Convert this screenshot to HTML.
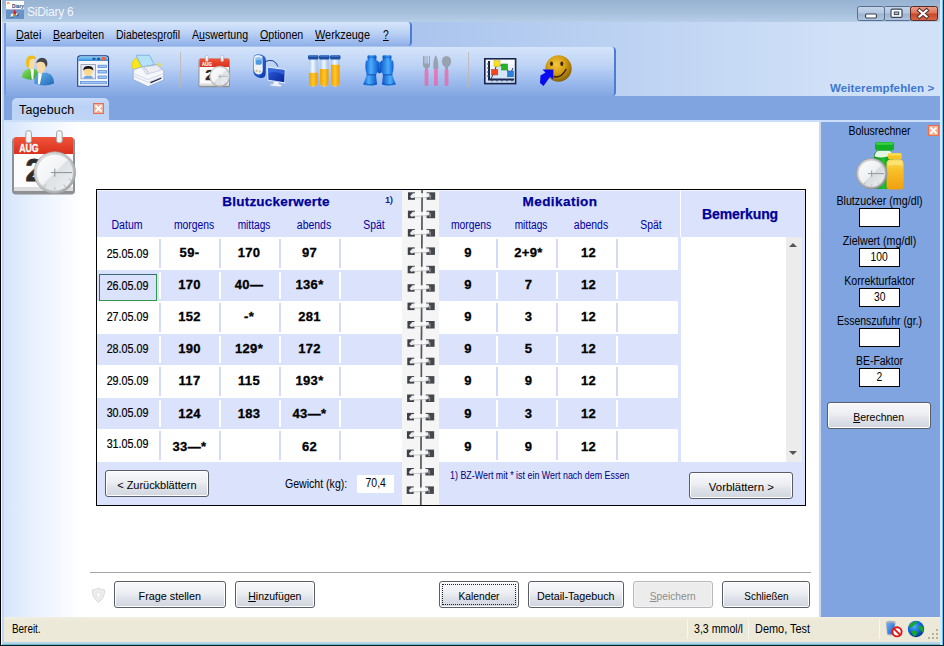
<!DOCTYPE html>
<html lang="de">
<head>
<meta charset="utf-8">
<title>SiDiary 6</title>
<style>
*{box-sizing:border-box;margin:0;padding:0}
html,body{width:944px;height:646px;overflow:hidden;background:#fff}
body{position:relative;font-family:"Liberation Sans",sans-serif;font-size:11px;color:#000}
.abs{position:absolute}
u{text-decoration:underline;text-underline-offset:1px}
/* window chrome */
#titlebar{left:0;top:0;width:944px;height:22px;background:linear-gradient(#97b2d2 0,#a7c0dd 60%,#b7cee8 100%)}
#title{left:27px;top:4.2px;font-size:12px;color:#f2f6fc;letter-spacing:-.25px;line-height:17px}
#menurow{left:0;top:22px;width:944px;height:74px;background:linear-gradient(90deg,#a8c2ec 0,#abc5ee 45%,#cfe0f7 88%,#d0e1f8 100%)}
#menupanel{left:3px;top:22px;width:409px;height:24px;border-right:2px solid #4c7dd2;border-radius:0 4px 4px 0;background:linear-gradient(#d6e6fb 0,#bcd2f5 45%,#8eafe8 100%)}
.mi{top:27.8px;font-size:12px;line-height:14px;white-space:nowrap;transform-origin:0 50%}
#toolpanel{left:3px;top:47px;width:613px;height:49px;border-right:2px solid #4c7dd2;border-radius:0 4px 4px 0;background:linear-gradient(#d4e4fa 0,#bcd2f5 40%,#9dbbee 70%,#82a7e2 100%)}
#tabrow{left:0;top:95.5px;width:944px;height:25.5px;background:#7fa4df}
#tab{left:12px;top:97.5px;width:97px;height:23.5px;background:linear-gradient(#c6dafa,#bad2f6 40%,#c0d6f7);border-radius:5px 5px 0 0}
#tabtxt{left:19px;top:102px;font-size:12.5px;line-height:16px;letter-spacing:.15px}
#underline{left:0;top:120px;width:944px;height:2px;background:#cbdefa}
#content{left:4px;top:122px;width:816px;height:495px;background:linear-gradient(90deg,#d5e6fc 0,#e8f1fd 30px,#fff 77px)}
#rightpanel{left:820px;top:122px;width:121px;height:495px;background:#7fa4df}
#status{left:0;top:617px;width:944px;height:25px;background:linear-gradient(#f1efe2 0,#ece9d8 4px,#ece9d8 100%)}
#bottomedge{left:0;top:642px;width:944px;height:4px;background:linear-gradient(#b9d4ea 0,#b4d4ea 2px,#62b0c0 2.6px,#00262c 3.2px)}
#leftedge{left:0;top:0;width:2px;height:644.5px;background:linear-gradient(90deg,#000 0,#000 50%,#f4f8ff 50%)}
#leftedge2{left:2px;top:22px;width:2px;height:622px;background:#c2d6f5}
#leftedge3{left:4px;top:23px;width:1.5px;height:72px;background:#7398dc}
#rightedge{left:940px;top:0;width:4px;height:644.5px;background:linear-gradient(90deg,#d8e8fd 0,#d8e8fd 1.7px,#5ec6ef 1.7px,#5ec6ef 2.7px,#0a1a40 2.7px)}
.hd{font-weight:bold;font-size:13.5px;line-height:16px;color:#000099;-webkit-text-stroke:.25px #000099;text-align:center;letter-spacing:.2px;white-space:nowrap}
.ch{width:80px;text-align:center;font-size:12px;line-height:14px;color:#0000a0;white-space:nowrap;transform:scaleX(.87)}
.dt{width:61px;text-align:center;font-size:12.5px;line-height:16px;white-space:nowrap;transform:scaleX(.857);-webkit-text-stroke:.2px #000}
.vl{width:60px;text-align:center;font-size:13px;font-weight:bold;line-height:16px;letter-spacing:.35px;white-space:nowrap;-webkit-text-stroke:.3px #000}
.btn{border:1px solid #595d68;border-radius:3px;background:linear-gradient(#f9f9fb 0,#eceef2 45%,#dfe2e9 65%,#d1d5df 100%);box-shadow:inset 0 0 0 1px #fff;font-size:11px;text-align:center;white-space:nowrap;display:flex;align-items:center;justify-content:center}
.pl{width:121px;text-align:center;font-size:12px;line-height:14px;white-space:nowrap;transform:scaleX(.895)}
.inp{width:41px;height:19px;background:#fff;border:1px solid #000;font-size:12px;line-height:17px;text-align:center}.inp span{display:inline-block;transform:scaleX(.86)}
.bt{display:inline-block;position:relative;top:1px}
.dis{color:#8c8c8c;border-color:#b6b8bb;background:#ececec;box-shadow:inset 0 0 0 1px #f4f4f4}
.st{font-size:12px;line-height:16px;white-space:nowrap;transform:scaleX(.9);transform-origin:0 50%}
</style>
</head>
<body>
<div id="titlebar" class="abs"></div>
<div id="title" class="abs">SiDiary 6</div>
<div id="menurow" class="abs"></div>
<div id="menupanel" class="abs"></div>
<div class="abs mi" style="left:16px;transform:scaleX(0.903)"><u>D</u>atei</div>
<div class="abs mi" style="left:53px;transform:scaleX(0.879)"><u>B</u>earbeiten</div>
<div class="abs mi" style="left:116px;transform:scaleX(0.872)">Diabetes<u>p</u>rofil</div>
<div class="abs mi" style="left:192px;transform:scaleX(0.884)">A<u>u</u>swertung</div>
<div class="abs mi" style="left:260px;transform:scaleX(0.888)"><u>O</u>ptionen</div>
<div class="abs mi" style="left:315px;transform:scaleX(0.909)"><u>W</u>erkzeuge</div>
<div class="abs mi" style="left:383px;transform:scaleX(0.86)"><u>?</u></div>
<div id="toolpanel" class="abs"></div>
<div id="tabrow" class="abs"></div>
<div id="tab" class="abs"></div>
<div id="tabtxt" class="abs">Tagebuch</div>
<div id="underline" class="abs"></div>
<div id="content" class="abs"></div>
<div id="rightpanel" class="abs"></div>
<div id="status" class="abs"></div>
<div id="bottomedge" class="abs"></div>
<div id="leftedge" class="abs"></div>
<div id="leftedge2" class="abs"></div>
<div id="leftedge3" class="abs"></div>
<div id="rightedge" class="abs"></div>
<div class="abs" style="left:96px;top:189px;width:710px;height:317px;border:1px solid #000;border-top-width:2px;background:#dbe2fb"></div>
<div class="abs" style="left:97px;top:190px;width:708px;height:1px;background:#f4f6fe"></div>
<div class="abs" style="left:402px;top:190px;width:37px;height:315px;background:#f5f5f6"></div>
<div class="abs" style="left:97px;top:237px;width:305px;height:33px;background:#fff"></div>
<div class="abs" style="left:439px;top:237px;width:239px;height:33px;background:#fff"></div>
<div class="abs" style="left:97px;top:301px;width:305px;height:33px;background:#fff"></div>
<div class="abs" style="left:439px;top:301px;width:239px;height:33px;background:#fff"></div>
<div class="abs" style="left:97px;top:365px;width:305px;height:33px;background:#fff"></div>
<div class="abs" style="left:439px;top:365px;width:239px;height:33px;background:#fff"></div>
<div class="abs" style="left:97px;top:429px;width:305px;height:33px;background:#fff"></div>
<div class="abs" style="left:439px;top:429px;width:239px;height:33px;background:#fff"></div>
<div class="abs" style="left:159px;top:239px;width:2px;height:29px;background:#d3dbf8"></div>
<div class="abs" style="left:219px;top:239px;width:2px;height:29px;background:#d3dbf8"></div>
<div class="abs" style="left:279px;top:239px;width:2px;height:29px;background:#d3dbf8"></div>
<div class="abs" style="left:339px;top:239px;width:2px;height:29px;background:#d3dbf8"></div>
<div class="abs" style="left:496px;top:239px;width:2px;height:29px;background:#d3dbf8"></div>
<div class="abs" style="left:556px;top:239px;width:2px;height:29px;background:#d3dbf8"></div>
<div class="abs" style="left:616px;top:239px;width:2px;height:29px;background:#d3dbf8"></div>
<div class="abs" style="left:159px;top:272px;width:2px;height:27px;background:#fff"></div>
<div class="abs" style="left:219px;top:272px;width:2px;height:27px;background:#fff"></div>
<div class="abs" style="left:279px;top:272px;width:2px;height:27px;background:#fff"></div>
<div class="abs" style="left:339px;top:272px;width:2px;height:27px;background:#fff"></div>
<div class="abs" style="left:496px;top:272px;width:2px;height:27px;background:#fff"></div>
<div class="abs" style="left:556px;top:272px;width:2px;height:27px;background:#fff"></div>
<div class="abs" style="left:616px;top:272px;width:2px;height:27px;background:#fff"></div>
<div class="abs" style="left:159px;top:303px;width:2px;height:29px;background:#d3dbf8"></div>
<div class="abs" style="left:219px;top:303px;width:2px;height:29px;background:#d3dbf8"></div>
<div class="abs" style="left:279px;top:303px;width:2px;height:29px;background:#d3dbf8"></div>
<div class="abs" style="left:339px;top:303px;width:2px;height:29px;background:#d3dbf8"></div>
<div class="abs" style="left:496px;top:303px;width:2px;height:29px;background:#d3dbf8"></div>
<div class="abs" style="left:556px;top:303px;width:2px;height:29px;background:#d3dbf8"></div>
<div class="abs" style="left:616px;top:303px;width:2px;height:29px;background:#d3dbf8"></div>
<div class="abs" style="left:159px;top:336px;width:2px;height:27px;background:#fff"></div>
<div class="abs" style="left:219px;top:336px;width:2px;height:27px;background:#fff"></div>
<div class="abs" style="left:279px;top:336px;width:2px;height:27px;background:#fff"></div>
<div class="abs" style="left:339px;top:336px;width:2px;height:27px;background:#fff"></div>
<div class="abs" style="left:496px;top:336px;width:2px;height:27px;background:#fff"></div>
<div class="abs" style="left:556px;top:336px;width:2px;height:27px;background:#fff"></div>
<div class="abs" style="left:616px;top:336px;width:2px;height:27px;background:#fff"></div>
<div class="abs" style="left:159px;top:367px;width:2px;height:29px;background:#d3dbf8"></div>
<div class="abs" style="left:219px;top:367px;width:2px;height:29px;background:#d3dbf8"></div>
<div class="abs" style="left:279px;top:367px;width:2px;height:29px;background:#d3dbf8"></div>
<div class="abs" style="left:339px;top:367px;width:2px;height:29px;background:#d3dbf8"></div>
<div class="abs" style="left:496px;top:367px;width:2px;height:29px;background:#d3dbf8"></div>
<div class="abs" style="left:556px;top:367px;width:2px;height:29px;background:#d3dbf8"></div>
<div class="abs" style="left:616px;top:367px;width:2px;height:29px;background:#d3dbf8"></div>
<div class="abs" style="left:159px;top:400px;width:2px;height:27px;background:#fff"></div>
<div class="abs" style="left:219px;top:400px;width:2px;height:27px;background:#fff"></div>
<div class="abs" style="left:279px;top:400px;width:2px;height:27px;background:#fff"></div>
<div class="abs" style="left:339px;top:400px;width:2px;height:27px;background:#fff"></div>
<div class="abs" style="left:496px;top:400px;width:2px;height:27px;background:#fff"></div>
<div class="abs" style="left:556px;top:400px;width:2px;height:27px;background:#fff"></div>
<div class="abs" style="left:616px;top:400px;width:2px;height:27px;background:#fff"></div>
<div class="abs" style="left:159px;top:431px;width:2px;height:29px;background:#d3dbf8"></div>
<div class="abs" style="left:219px;top:431px;width:2px;height:29px;background:#d3dbf8"></div>
<div class="abs" style="left:279px;top:431px;width:2px;height:29px;background:#d3dbf8"></div>
<div class="abs" style="left:339px;top:431px;width:2px;height:29px;background:#d3dbf8"></div>
<div class="abs" style="left:496px;top:431px;width:2px;height:29px;background:#d3dbf8"></div>
<div class="abs" style="left:556px;top:431px;width:2px;height:29px;background:#d3dbf8"></div>
<div class="abs" style="left:616px;top:431px;width:2px;height:29px;background:#d3dbf8"></div>
<div class="abs" style="left:680px;top:191px;width:1px;height:46px;background:#fff"></div>
<div class="abs" style="left:681px;top:237px;width:105px;height:225px;background:#fff"></div>
<div class="abs" style="left:786px;top:237px;width:16px;height:225px;background:#ececec"></div>
<div class="abs" style="left:789px;top:243px;width:0;height:0;border-left:4px solid transparent;border-right:4px solid transparent;border-bottom:4px solid #555"></div>
<div class="abs" style="left:789px;top:451px;width:0;height:0;border-left:4px solid transparent;border-right:4px solid transparent;border-top:4px solid #555"></div>
<div class="abs hd" style="left:196px;top:194px;width:160px">Blutzuckerwerte</div>
<div class="abs hd" style="left:480px;top:194px;width:160px;letter-spacing:.45px">Medikation</div>
<div class="abs hd" style="left:681px;top:206px;width:118px;font-size:14px;letter-spacing:-.1px">Bemerkung</div>
<div class="abs" style="left:385px;top:194px;font-size:9.5px;color:#000080;line-height:11px;letter-spacing:-.5px;-webkit-text-stroke:.2px #000080">1)</div>
<div class="abs ch" style="left:86.5px;top:218px;transform:scaleX(0.877)">Datum</div>
<div class="abs ch" style="left:154px;top:218px;transform:scaleX(0.861)">morgens</div>
<div class="abs ch" style="left:213.5px;top:218px;transform:scaleX(0.845)">mittags</div>
<div class="abs ch" style="left:274px;top:218px;transform:scaleX(0.871)">abends</div>
<div class="abs ch" style="left:334px;top:218px;transform:scaleX(0.867)">Spät</div>
<div class="abs ch" style="left:431px;top:218px;transform:scaleX(0.861)">morgens</div>
<div class="abs ch" style="left:490.5px;top:218px;transform:scaleX(0.845)">mittags</div>
<div class="abs ch" style="left:551px;top:218px;transform:scaleX(0.871)">abends</div>
<div class="abs ch" style="left:611px;top:218px;transform:scaleX(0.867)">Spät</div>
<div class="abs" style="left:99px;top:274px;width:58px;height:27px;border:1px solid #2f9a4c;border-top-color:#3a6a7a;border-left-color:#3a6a7a"></div>
<div class="abs dt" style="left:97px;top:245.7px">25.05.09</div>
<div class="abs vl" style="left:159.5px;top:244.9px">59-</div>
<div class="abs vl" style="left:438px;top:244.9px">9</div>
<div class="abs vl" style="left:219px;top:244.9px">170</div>
<div class="abs vl" style="left:498.5px;top:244.9px">2+9*</div>
<div class="abs vl" style="left:279.5px;top:244.9px">97</div>
<div class="abs vl" style="left:558.5px;top:244.9px">12</div>
<div class="abs dt" style="left:97px;top:277.7px">26.05.09</div>
<div class="abs vl" style="left:159.5px;top:276.9px">170</div>
<div class="abs vl" style="left:438px;top:276.9px">9</div>
<div class="abs vl" style="left:219px;top:276.9px">40—</div>
<div class="abs vl" style="left:498.5px;top:276.9px">7</div>
<div class="abs vl" style="left:279.5px;top:276.9px">136*</div>
<div class="abs vl" style="left:558.5px;top:276.9px">12</div>
<div class="abs dt" style="left:97px;top:308.7px">27.05.09</div>
<div class="abs vl" style="left:159.5px;top:308.9px">152</div>
<div class="abs vl" style="left:438px;top:308.9px">9</div>
<div class="abs vl" style="left:219px;top:308.9px">-*</div>
<div class="abs vl" style="left:498.5px;top:308.9px">3</div>
<div class="abs vl" style="left:279.5px;top:308.9px">281</div>
<div class="abs vl" style="left:558.5px;top:308.9px">12</div>
<div class="abs dt" style="left:97px;top:340.7px">28.05.09</div>
<div class="abs vl" style="left:159.5px;top:341.1px">190</div>
<div class="abs vl" style="left:438px;top:341.1px">9</div>
<div class="abs vl" style="left:219px;top:341.1px">129*</div>
<div class="abs vl" style="left:498.5px;top:341.1px">5</div>
<div class="abs vl" style="left:279.5px;top:341.1px">172</div>
<div class="abs vl" style="left:558.5px;top:341.1px">12</div>
<div class="abs dt" style="left:97px;top:372.7px">29.05.09</div>
<div class="abs vl" style="left:159.5px;top:373.3px">117</div>
<div class="abs vl" style="left:438px;top:373.3px">9</div>
<div class="abs vl" style="left:219px;top:373.3px">115</div>
<div class="abs vl" style="left:498.5px;top:373.3px">9</div>
<div class="abs vl" style="left:279.5px;top:373.3px">193*</div>
<div class="abs vl" style="left:558.5px;top:373.3px">12</div>
<div class="abs dt" style="left:97px;top:404.7px">30.05.09</div>
<div class="abs vl" style="left:159.5px;top:406.4px">124</div>
<div class="abs vl" style="left:438px;top:406.4px">9</div>
<div class="abs vl" style="left:219px;top:406.4px">183</div>
<div class="abs vl" style="left:498.5px;top:406.4px">3</div>
<div class="abs vl" style="left:279.5px;top:406.4px">43—*</div>
<div class="abs vl" style="left:558.5px;top:406.4px">12</div>
<div class="abs dt" style="left:97px;top:435.7px">31.05.09</div>
<div class="abs vl" style="left:159.5px;top:438.8px">33—*</div>
<div class="abs vl" style="left:438px;top:438.8px">9</div>
<div class="abs vl" style="left:498.5px;top:438.8px">9</div>
<div class="abs vl" style="left:279.5px;top:438.8px">62</div>
<div class="abs vl" style="left:558.5px;top:438.8px">12</div>
<div class="abs btn" style="left:105px;top:470px;width:104px;height:27px"><span class="bt" style="transform:scaleX(0.995)">&lt; Zurückblättern</span></div>
<div class="abs btn" style="left:689px;top:472px;width:104px;height:27px"><span class="bt" style="transform:scaleX(1.037)">Vorblättern &gt;</span></div>
<div class="abs" style="left:284.5px;top:477px;font-size:12px;line-height:14px;white-space:nowrap;transform:scaleX(.88);transform-origin:0 50%">Gewicht (kg):</div>
<div class="abs" style="left:357px;top:475px;width:37px;height:18px;background:#fff;font-size:12px;line-height:17px;text-align:center"><span style="display:inline-block;transform:scaleX(.87)">70,4</span></div>
<div class="abs" style="left:449.5px;top:469px;font-size:10.5px;line-height:12px;color:#000080;white-space:nowrap;transform:scaleX(.848);transform-origin:0 50%">1) BZ-Wert mit * ist ein Wert nach dem Essen</div>
<svg class="abs" style="left:402px;top:190px" width="37" height="315" viewBox="0 0 37 315"><path d="M20.1 0 L18.8 315" stroke="#54575b" stroke-width="1.7"/><g transform="translate(-0.00,2.3)"><rect x="6" y="0" width="7" height="7.5" fill="#3e4146"/><rect x="24.6" y="0" width="8.6" height="7.5" fill="#44474c"/><rect x="27.5" y="2.4" width="1.6" height="4" fill="#8a8d92"/><path d="M8 4.2 L10.8 1 L27.4 1 L27.4 4.6 L13 5.2 L9.5 6 Z" fill="#fafafb" opacity=".93"/><path d="M12 5.6 L26 5" stroke="#b4b6ba" stroke-width=".7"/></g><g transform="translate(-0.08,20.7)"><rect x="6" y="0" width="7" height="7.5" fill="#3e4146"/><rect x="24.6" y="0" width="8.6" height="7.5" fill="#44474c"/><rect x="27.5" y="2.4" width="1.6" height="4" fill="#8a8d92"/><path d="M8 4.2 L10.8 1 L27.4 1 L27.4 4.6 L13 5.2 L9.5 6 Z" fill="#fafafb" opacity=".93"/><path d="M12 5.6 L26 5" stroke="#b4b6ba" stroke-width=".7"/></g><g transform="translate(-0.16,39.1)"><rect x="6" y="0" width="7" height="7.5" fill="#3e4146"/><rect x="24.6" y="0" width="8.6" height="7.5" fill="#44474c"/><rect x="27.5" y="2.4" width="1.6" height="4" fill="#8a8d92"/><path d="M8 4.2 L10.8 1 L27.4 1 L27.4 4.6 L13 5.2 L9.5 6 Z" fill="#fafafb" opacity=".93"/><path d="M12 5.6 L26 5" stroke="#b4b6ba" stroke-width=".7"/></g><g transform="translate(-0.24,57.4)"><rect x="6" y="0" width="7" height="7.5" fill="#3e4146"/><rect x="24.6" y="0" width="8.6" height="7.5" fill="#44474c"/><rect x="27.5" y="2.4" width="1.6" height="4" fill="#8a8d92"/><path d="M8 4.2 L10.8 1 L27.4 1 L27.4 4.6 L13 5.2 L9.5 6 Z" fill="#fafafb" opacity=".93"/><path d="M12 5.6 L26 5" stroke="#b4b6ba" stroke-width=".7"/></g><g transform="translate(-0.33,75.8)"><rect x="6" y="0" width="7" height="7.5" fill="#3e4146"/><rect x="24.6" y="0" width="8.6" height="7.5" fill="#44474c"/><rect x="27.5" y="2.4" width="1.6" height="4" fill="#8a8d92"/><path d="M8 4.2 L10.8 1 L27.4 1 L27.4 4.6 L13 5.2 L9.5 6 Z" fill="#fafafb" opacity=".93"/><path d="M12 5.6 L26 5" stroke="#b4b6ba" stroke-width=".7"/></g><g transform="translate(-0.41,94.2)"><rect x="6" y="0" width="7" height="7.5" fill="#3e4146"/><rect x="24.6" y="0" width="8.6" height="7.5" fill="#44474c"/><rect x="27.5" y="2.4" width="1.6" height="4" fill="#8a8d92"/><path d="M8 4.2 L10.8 1 L27.4 1 L27.4 4.6 L13 5.2 L9.5 6 Z" fill="#fafafb" opacity=".93"/><path d="M12 5.6 L26 5" stroke="#b4b6ba" stroke-width=".7"/></g><g transform="translate(-0.49,112.6)"><rect x="6" y="0" width="7" height="7.5" fill="#3e4146"/><rect x="24.6" y="0" width="8.6" height="7.5" fill="#44474c"/><rect x="27.5" y="2.4" width="1.6" height="4" fill="#8a8d92"/><path d="M8 4.2 L10.8 1 L27.4 1 L27.4 4.6 L13 5.2 L9.5 6 Z" fill="#fafafb" opacity=".93"/><path d="M12 5.6 L26 5" stroke="#b4b6ba" stroke-width=".7"/></g><g transform="translate(-0.57,131.0)"><rect x="6" y="0" width="7" height="7.5" fill="#3e4146"/><rect x="24.6" y="0" width="8.6" height="7.5" fill="#44474c"/><rect x="27.5" y="2.4" width="1.6" height="4" fill="#8a8d92"/><path d="M8 4.2 L10.8 1 L27.4 1 L27.4 4.6 L13 5.2 L9.5 6 Z" fill="#fafafb" opacity=".93"/><path d="M12 5.6 L26 5" stroke="#b4b6ba" stroke-width=".7"/></g><g transform="translate(-0.65,149.3)"><rect x="6" y="0" width="7" height="7.5" fill="#3e4146"/><rect x="24.6" y="0" width="8.6" height="7.5" fill="#44474c"/><rect x="27.5" y="2.4" width="1.6" height="4" fill="#8a8d92"/><path d="M8 4.2 L10.8 1 L27.4 1 L27.4 4.6 L13 5.2 L9.5 6 Z" fill="#fafafb" opacity=".93"/><path d="M12 5.6 L26 5" stroke="#b4b6ba" stroke-width=".7"/></g><g transform="translate(-0.73,167.7)"><rect x="6" y="0" width="7" height="7.5" fill="#3e4146"/><rect x="24.6" y="0" width="8.6" height="7.5" fill="#44474c"/><rect x="27.5" y="2.4" width="1.6" height="4" fill="#8a8d92"/><path d="M8 4.2 L10.8 1 L27.4 1 L27.4 4.6 L13 5.2 L9.5 6 Z" fill="#fafafb" opacity=".93"/><path d="M12 5.6 L26 5" stroke="#b4b6ba" stroke-width=".7"/></g><g transform="translate(-0.81,186.1)"><rect x="6" y="0" width="7" height="7.5" fill="#3e4146"/><rect x="24.6" y="0" width="8.6" height="7.5" fill="#44474c"/><rect x="27.5" y="2.4" width="1.6" height="4" fill="#8a8d92"/><path d="M8 4.2 L10.8 1 L27.4 1 L27.4 4.6 L13 5.2 L9.5 6 Z" fill="#fafafb" opacity=".93"/><path d="M12 5.6 L26 5" stroke="#b4b6ba" stroke-width=".7"/></g><g transform="translate(-0.89,204.5)"><rect x="6" y="0" width="7" height="7.5" fill="#3e4146"/><rect x="24.6" y="0" width="8.6" height="7.5" fill="#44474c"/><rect x="27.5" y="2.4" width="1.6" height="4" fill="#8a8d92"/><path d="M8 4.2 L10.8 1 L27.4 1 L27.4 4.6 L13 5.2 L9.5 6 Z" fill="#fafafb" opacity=".93"/><path d="M12 5.6 L26 5" stroke="#b4b6ba" stroke-width=".7"/></g><g transform="translate(-0.98,222.9)"><rect x="6" y="0" width="7" height="7.5" fill="#3e4146"/><rect x="24.6" y="0" width="8.6" height="7.5" fill="#44474c"/><rect x="27.5" y="2.4" width="1.6" height="4" fill="#8a8d92"/><path d="M8 4.2 L10.8 1 L27.4 1 L27.4 4.6 L13 5.2 L9.5 6 Z" fill="#fafafb" opacity=".93"/><path d="M12 5.6 L26 5" stroke="#b4b6ba" stroke-width=".7"/></g><g transform="translate(-1.06,241.2)"><rect x="6" y="0" width="7" height="7.5" fill="#3e4146"/><rect x="24.6" y="0" width="8.6" height="7.5" fill="#44474c"/><rect x="27.5" y="2.4" width="1.6" height="4" fill="#8a8d92"/><path d="M8 4.2 L10.8 1 L27.4 1 L27.4 4.6 L13 5.2 L9.5 6 Z" fill="#fafafb" opacity=".93"/><path d="M12 5.6 L26 5" stroke="#b4b6ba" stroke-width=".7"/></g><g transform="translate(-1.14,259.6)"><rect x="6" y="0" width="7" height="7.5" fill="#3e4146"/><rect x="24.6" y="0" width="8.6" height="7.5" fill="#44474c"/><rect x="27.5" y="2.4" width="1.6" height="4" fill="#8a8d92"/><path d="M8 4.2 L10.8 1 L27.4 1 L27.4 4.6 L13 5.2 L9.5 6 Z" fill="#fafafb" opacity=".93"/><path d="M12 5.6 L26 5" stroke="#b4b6ba" stroke-width=".7"/></g><g transform="translate(-1.22,278.0)"><rect x="6" y="0" width="7" height="7.5" fill="#3e4146"/><rect x="24.6" y="0" width="8.6" height="7.5" fill="#44474c"/><rect x="27.5" y="2.4" width="1.6" height="4" fill="#8a8d92"/><path d="M8 4.2 L10.8 1 L27.4 1 L27.4 4.6 L13 5.2 L9.5 6 Z" fill="#fafafb" opacity=".93"/><path d="M12 5.6 L26 5" stroke="#b4b6ba" stroke-width=".7"/></g><g transform="translate(-1.30,296.4)"><rect x="6" y="0" width="7" height="7.5" fill="#3e4146"/><rect x="24.6" y="0" width="8.6" height="7.5" fill="#44474c"/><rect x="27.5" y="2.4" width="1.6" height="4" fill="#8a8d92"/><path d="M8 4.2 L10.8 1 L27.4 1 L27.4 4.6 L13 5.2 L9.5 6 Z" fill="#fafafb" opacity=".93"/><path d="M12 5.6 L26 5" stroke="#b4b6ba" stroke-width=".7"/></g></svg>
<div class="abs" style="left:819px;top:122px;width:2px;height:495px;background:#cbd9ef"></div>
<div class="abs pl" style="left:819px;top:124px;transform:scaleX(0.877)">Bolusrechner</div>
<svg class="abs" style="left:928px;top:125px" width="11" height="11" viewBox="0 0 11 11"><rect x=".5" y=".5" width="10" height="10" fill="#f2b09a" stroke="#e8714f"/><path d="M3 3 L8 8 M8 3 L3 8" stroke="#fff" stroke-width="1.8" stroke-linecap="round"/></svg>
<div class="abs pl" style="left:819px;top:194px;transform:scaleX(0.891)">Blutzucker (mg/dl)</div>
<div class="abs inp" style="left:859px;top:208px"></div>
<div class="abs pl" style="left:819px;top:234px;transform:scaleX(0.889)">Zielwert (mg/dl)</div>
<div class="abs inp" style="left:859px;top:248px"><span>100</span></div>
<div class="abs pl" style="left:819px;top:274px;transform:scaleX(0.888)">Korrekturfaktor</div>
<div class="abs inp" style="left:859px;top:288px"><span>30</span></div>
<div class="abs pl" style="left:819px;top:314px;transform:scaleX(0.873)">Essenszufuhr (gr.)</div>
<div class="abs inp" style="left:859px;top:328px"></div>
<div class="abs pl" style="left:819px;top:354px;transform:scaleX(0.87)">BE-Faktor</div>
<div class="abs inp" style="left:859px;top:368px"><span>2</span></div>
<div class="abs btn" style="left:827px;top:402px;width:104px;height:27px"><span class="bt" style="transform:scaleX(0.955)"><u>B</u>erechnen</span></div>

<div class="abs" style="left:90px;top:572px;width:721px;height:1px;background:#a5a5a5"></div>
<div class="abs btn" style="left:114px;top:581px;width:112px;height:27px"><span class="bt" style="transform:scaleX(0.983)">Frage stellen</span></div>
<div class="abs btn" style="left:235px;top:581px;width:80px;height:27px"><span class="bt" style="transform:scaleX(0.956)"><u>H</u>inzufügen</span></div>
<div class="abs btn" style="left:439px;top:581px;width:80px;height:27px"><span class="bt" style="transform:scaleX(0.931)">Kalender</span><i class="abs" style="left:2px;top:2px;right:2px;bottom:2px;border:1px dotted #222"></i></div>
<div class="abs btn" style="left:528px;top:581px;width:96px;height:27px"><span class="bt" style="transform:scaleX(0.976)">Detail-Tagebuch</span></div>
<div class="abs btn dis" style="left:633px;top:581px;width:80px;height:27px"><span class="bt" style="transform:scaleX(0.928)"><u>S</u>peichern</span></div>
<div class="abs btn" style="left:722px;top:581px;width:88px;height:27px"><span class="bt" style="transform:scaleX(0.903)">Schließen</span></div>
<div class="abs st" style="left:12px;top:621px;transform:scaleX(0.825)">Bereit.</div>
<div class="abs st" style="left:694px;top:621px;transform:scaleX(0.885)">3,3 mmol/l</div>
<div class="abs st" style="left:755px;top:621px;transform:scaleX(0.91)">Demo, Test</div>
<div class="abs" style="left:687px;top:619px;width:1px;height:20px;background:#f8f6ee"></div>
<div class="abs" style="left:748px;top:619px;width:1px;height:20px;background:#f8f6ee"></div>
<div class="abs" style="left:879px;top:619px;width:1px;height:20px;background:#f8f6ee"></div>

<!-- title icon -->
<svg class="abs" style="left:6px;top:1px" width="18" height="18" viewBox="0 0 18 18">
<rect width="18" height="8.5" fill="#fff"/><rect y="8.5" width="18" height="9.5" fill="#6a92ca"/>
<rect x="1" y="1" width="2.5" height="2" fill="#f8a868"/>
<text x="6" y="7.4" font-family="Liberation Sans, sans-serif" font-size="5.5" font-weight="bold" fill="#1a3a5a" textLength="12" lengthAdjust="spacingAndGlyphs">Diary</text>
<path d="M8.5 8.5 Q10.5 10 10 13 L7.6 13 Q7 10 8.5 8.5Z" fill="#e02018"/>
<path d="M5 13 L7.5 12.5 L7 15.5 L4.5 16Z" fill="#e8f4ee"/><path d="M4.5 16 L7 15.5 L7 16.6 L4.5 16.8Z" fill="#1c7a50"/>
<circle cx="11.6" cy="13" r="1.4" fill="#f4f4f4"/><path d="M11 11.5 Q13.6 12.5 11.5 15.3" stroke="#1a2430" stroke-width="1" fill="none"/>
<path d="M7.6 13 L10 13 L9.6 15 L8 15Z" fill="#c88a20"/>
</svg>
<!-- window buttons -->
<svg class="abs" style="left:856px;top:5px" width="83" height="17" viewBox="0 0 83 17">
<defs><linearGradient id="wb" x1="0" y1="0" x2="0" y2="1"><stop offset="0" stop-color="#c6d6ea"/><stop offset=".48" stop-color="#b4c7e0"/><stop offset=".52" stop-color="#9db4d2"/><stop offset="1" stop-color="#b0c6e2"/></linearGradient>
<linearGradient id="wc" x1="0" y1="0" x2="0" y2="1"><stop offset="0" stop-color="#eba08c"/><stop offset=".48" stop-color="#dc7458"/><stop offset=".52" stop-color="#c84628"/><stop offset="1" stop-color="#d8684a"/></linearGradient></defs>
<rect x="1.5" y="1.5" width="27" height="14" rx="2" fill="url(#wb)" stroke="#5a6f8e"/>
<rect x="28.5" y="1.5" width="26" height="14" rx="1" fill="url(#wb)" stroke="#5a6f8e"/>
<rect x="54.5" y="1.5" width="27" height="14" rx="2" fill="url(#wc)" stroke="#5a2a24"/>
<rect x="9.5" y="9" width="11" height="4" rx="1.2" fill="#fff" stroke="#3c4654" stroke-width="1.2"/>
<rect x="35" y="4.2" width="11" height="8.2" rx="1.2" fill="#fff" stroke="#3c4654" stroke-width="1.2"/><rect x="38.3" y="7" width="4.4" height="2.6" fill="#b4c4d8" stroke="#3c4654" stroke-width="1"/>
<path d="M63.5 5.5 L70.5 11.5 M70.5 5.5 L63.5 11.5" stroke="#54302c" stroke-width="4.2" stroke-linecap="square"/>
<path d="M63.5 5.5 L70.5 11.5 M70.5 5.5 L63.5 11.5" stroke="#fff" stroke-width="2.2" stroke-linecap="square"/>
</svg>
<div class="abs" style="left:830px;top:81px;font-size:11.5px;font-weight:bold;color:#3d78d2;line-height:14px;white-space:nowrap;letter-spacing:.12px">Weiterempfehlen &gt;</div>
<!-- tab close -->
<svg class="abs" style="left:93px;top:103px" width="11" height="11" viewBox="0 0 11 11"><rect x=".5" y=".5" width="10" height="10" fill="#f2b09a" stroke="#e8714f"/><path d="M3 3 L8 8 M8 3 L3 8" stroke="#fff" stroke-width="1.8" stroke-linecap="round"/></svg>
<!-- toolbar separators -->
<div class="abs" style="left:180px;top:52px;width:1px;height:36px;background:rgba(196,180,172,.8)"></div>
<div class="abs" style="left:468px;top:52px;width:1px;height:36px;background:rgba(196,180,172,.8)"></div>
<!-- users -->
<svg class="abs" style="left:21px;top:54px" width="34" height="33" viewBox="0 0 34 33">
<defs><linearGradient id="ug" x1="0" y1="0" x2="1" y2="1"><stop offset="0" stop-color="#8ee060"/><stop offset="1" stop-color="#2c9c2a"/></linearGradient>
<linearGradient id="ub" x1="0" y1="0" x2="1" y2="1"><stop offset="0" stop-color="#6ab4ee"/><stop offset="1" stop-color="#2068b8"/></linearGradient></defs>
<path d="M1 23.5 Q.6 16.5 7.5 15 L14 15 Q17.5 16.5 17 24 Q9 27.5 1 23.5Z" fill="url(#ug)"/>
<path d="M9.5 15 L12.8 15 L12.4 25.6 L10.8 25.2Z" fill="#fff"/>
<path d="M7.2 5 Q10 2.5 13.4 4.4 L13.6 11.5 Q12.5 15.5 10.4 15.6 Q7.6 14.5 7.2 10Z" fill="#f8dca8"/>
<path d="M5.6 13.2 Q3.6 5 7.6 2.2 Q11.5 .4 14.8 3 Q15.2 5.2 13.6 5 Q10.4 4 8.6 6.4 Q8 9.5 8.2 13.4Z" fill="#f0be18"/>
<path d="M13.4 29.5 Q12.4 21.5 19 18.8 L26 18.8 Q33.4 21 33 29.6 Q23 33.6 13.4 29.5Z" fill="url(#ub)"/>
<path d="M17.4 19 L21 19.4 L18.8 30.6 L16.8 30Z" fill="#fff"/>
<path d="M15.6 10 Q17 6.5 21 7 Q24.6 8 24.4 13 Q24 17.5 20.6 19.6 Q17.8 19.4 16.4 16 Q15.4 13 15.6 10Z" fill="#f8d8a4"/>
<path d="M15.2 9.2 Q16 4.4 21 3.8 Q26.6 4.4 26.4 10 Q26.2 12.4 25 13.2 Q24.6 9.8 22.4 8.2 Q18.6 7.2 15.2 9.2Z" fill="#44464e"/>
</svg>
<!-- id card -->
<svg class="abs" style="left:76px;top:55px" width="34" height="32" viewBox="0 0 34 32">
<defs><linearGradient id="ic1" x1="0" y1="0" x2="0" y2="1"><stop offset="0" stop-color="#8ad0f6"/><stop offset="1" stop-color="#2f8edc"/></linearGradient></defs>
<path d="M1.7 31.2 V3.6 Q1.7 .9 4.4 .9 H29.8 Q32.5 .9 32.5 3.6 V31.2Z" fill="#f4f7fd" stroke="#1f3d8a" stroke-width="1.1"/>
<path d="M2.3 6 V3.7 Q2.3 1.5 4.5 1.5 H29.7 Q31.9 1.5 31.9 3.7 V6Z" fill="url(#ic1)"/>
<rect x="16.6" y="2.8" width="2.8" height="2" fill="#1c4e90"/><rect x="21.2" y="2.8" width="2.8" height="2" fill="#1c4e90"/><rect x="25.8" y="2" width="3.8" height="3.4" fill="#f0603c"/>
<rect x="5" y="9.6" width="14.6" height="14.2" fill="#e8eef8" stroke="#8e96aa" stroke-width=".8"/>
<path d="M7.6 23.4 Q8 20.6 12.3 20.6 Q16.6 20.6 17 23.4Z" fill="#6aa4e6"/>
<ellipse cx="12.3" cy="16.6" rx="4.3" ry="4.5" fill="#fcd88c"/>
<path d="M7.2 15.4 Q7.2 11 12.3 11 Q17.4 11 17.4 15.4 Q15 13.2 12.3 13.8 Q9.6 13.2 7.2 15.4Z" fill="#161616"/>
<rect x="22" y="10.2" width="8.6" height="2.4" fill="#a4c6f2" stroke="#4c84d4" stroke-width=".7"/>
<rect x="22" y="15.6" width="8.6" height="2.4" fill="#a4c6f2" stroke="#4c84d4" stroke-width=".7"/>
<rect x="22" y="21" width="8.6" height="2.4" fill="#a4c6f2" stroke="#4c84d4" stroke-width=".7"/>
<rect x="4.6" y="26.6" width="26" height="2.2" fill="#a4c6f2" stroke="#4c84d4" stroke-width=".7"/>
</svg>
<!-- printer -->
<svg class="abs" style="left:131px;top:54px" width="35" height="34" viewBox="0 0 35 34">
<path d="M1.2 13 Q.6 6 4.5 4.6 Q7.5 4 9 5.4 L11.4 13 L3 16Z" fill="#f8e81a" stroke="#d6c40e" stroke-width=".6"/>
<path d="M5.1 1.3 L18.6 1.3 L23.2 10.6 L11 13.2Z" fill="#b4e2f8" stroke="#68a8d4" stroke-width=".7"/>
<path d="M26.4 9.2 L29.4 9.6 L30 12 L27 12Z" fill="#f0e020"/>
<path d="M2.2 15.8 L11 12.8 L26.4 10.6 L32.8 17 L32.8 26 L17 32.6 L2.2 25.6Z" fill="#f6f7fb" stroke="#8ea8d0" stroke-width=".8"/>
<path d="M11 13.4 L25.6 11.4 L30.6 16 L15.4 20.4Z" fill="#eceef4" stroke="#b8bcd0" stroke-width=".6"/>
<path d="M13 14.2 Q17 16 17.4 19.6" stroke="#a8accc" stroke-width=".7" fill="none"/>
<path d="M2.4 19.5 L17 25.6 L32.8 19.4 M2.4 22 L17 28.4 L32.8 22" stroke="#c4c8dc" stroke-width=".7" fill="none"/>
<path d="M19.4 28 L30.4 23.4 L30.4 24.8 L19.4 29.5Z" fill="#20284c"/>
</svg>
<!-- device + monitor -->
<svg class="abs" style="left:252px;top:54px" width="35" height="34" viewBox="0 0 35 34">
<defs><linearGradient id="dv" x1="0" y1="0" x2="1" y2="1"><stop offset="0" stop-color="#4a90ec"/><stop offset="1" stop-color="#0a30a8"/></linearGradient>
<linearGradient id="mn" x1="0" y1="0" x2="1" y2="1"><stop offset="0" stop-color="#2c60dc"/><stop offset="1" stop-color="#08249c"/></linearGradient></defs>
<path d="M12.5 8 Q17 5.5 21 6.8 Q24.5 8.5 26 12.5" stroke="#1a3c9c" stroke-width="1" fill="none"/>
<path d="M4 .6 Q9 -.6 12.6 2.4 Q14.2 4 14 8 L13.6 20 Q13.2 24.4 8.5 24 Q3 23.4 1.4 19 L1.2 5 Q1.6 1.4 4 .6Z" fill="url(#dv)"/>
<path d="M3.8 1.4 Q7.5 .4 10.4 2.6 L10.8 15.5 Q10.6 20.6 6.6 20.4 Q2.4 20 2 15.5 L1.8 4.5 Q2.2 2 3.8 1.4Z" fill="#eef2f8"/>
<path d="M3.6 4 Q6.6 2.8 9.6 4 L9.8 10 Q6.8 11.6 3.6 10.2Z" fill="#4a98e2"/>
<path d="M3.6 4 Q6.6 2.8 9.6 4 L9.7 6.5 Q6.6 5.4 3.6 6.6Z" fill="#8cc4f0"/>
<circle cx="4.6" cy="16.8" r="1.1" fill="#c8b888"/><circle cx="7.8" cy="17.6" r="1.1" fill="#c8b888"/>
<path d="M15 12.6 L33.4 15.2 L33 29.4 L15.6 26.6Z" fill="#e8eef8"/>
<path d="M15.9 13.7 L32.6 16.1 L32.3 28.3 L16.4 25.8Z" fill="url(#mn)"/>
<path d="M16 19.5 Q23 16 32.5 21 L32.6 16.1 L15.9 13.7Z" fill="#4a84f0" opacity=".45"/>
<path d="M21.5 27 L26.5 27.8 L26.8 30.2 L29.8 31.2 L28.4 32.6 L18.6 31.8 L18.2 30.6 L21.6 29.8Z" fill="#f0f3f8" stroke="#b4c0d4" stroke-width=".5"/>
</svg>
<!-- test tubes -->
<svg class="abs" style="left:307px;top:54px" width="35" height="34" viewBox="0 0 35 34">
<defs><linearGradient id="tl" x1="0" y1="0" x2="1" y2="0"><stop offset="0" stop-color="#f0a000"/><stop offset=".5" stop-color="#ffc828"/><stop offset="1" stop-color="#f09800"/></linearGradient>
<linearGradient id="tg" x1="0" y1="0" x2="1" y2="0"><stop offset="0" stop-color="#a8c8f0"/><stop offset=".45" stop-color="#f4f8fe"/><stop offset="1" stop-color="#a0c0ec"/></linearGradient></defs>
<g><path d="M2 4 H10.5 V28 Q10.5 32.5 6.25 32.5 Q2 32.5 2 28Z" fill="url(#tg)"/><path d="M2 18.7 H10.5 V28 Q10.5 32.5 6.25 32.5 Q2 32.5 2 28Z" fill="url(#tl)"/><rect x="1" y="1" width="10.5" height="4.5" rx="1.5" fill="#1e4ea4"/><rect x="2" y="1.3" width="8.5" height="1.2" rx=".6" fill="#5a8ad8"/></g>
<g transform="translate(11,0)"><path d="M2 4 H10.5 V28 Q10.5 32.5 6.25 32.5 Q2 32.5 2 28Z" fill="url(#tg)"/><path d="M2 15 H10.5 V28 Q10.5 32.5 6.25 32.5 Q2 32.5 2 28Z" fill="url(#tl)"/><rect x="1" y="1" width="10.5" height="4.5" rx="1.5" fill="#1e4ea4"/><rect x="2" y="1.3" width="8.5" height="1.2" rx=".6" fill="#5a8ad8"/></g>
<g transform="translate(22,0)"><path d="M2 4 H10.5 V28 Q10.5 32.5 6.25 32.5 Q2 32.5 2 28Z" fill="url(#tg)"/><path d="M2 10.8 H10.5 V28 Q10.5 32.5 6.25 32.5 Q2 32.5 2 28Z" fill="url(#tl)"/><rect x="1" y="1" width="10.5" height="4.5" rx="1.5" fill="#1e4ea4"/><rect x="2" y="1.3" width="8.5" height="1.2" rx=".6" fill="#5a8ad8"/></g>
</svg>
<!-- binoculars -->
<svg class="abs" style="left:362px;top:54px" width="35" height="34" viewBox="0 0 35 34">
<defs><linearGradient id="bn" x1="0" y1="0" x2="1" y2="0"><stop offset="0" stop-color="#0c60d4"/><stop offset=".4" stop-color="#4cacfc"/><stop offset="1" stop-color="#0a58c8"/></linearGradient>
<linearGradient id="bn2" x1="0" y1="0" x2="0" y2="1"><stop offset="0" stop-color="#2a88f0"/><stop offset="1" stop-color="#0a48b8"/></linearGradient></defs>
<path d="M13 8 H22 V17 L17.5 19.5 L13 17Z" fill="url(#bn2)"/>
<g><rect x="5.6" y="1.2" width="8.8" height="5.8" rx="1" fill="url(#bn)"/><path d="M5.6 3.2 H14.4" stroke="#0a50c0" stroke-width=".7"/><path d="M4 6.6 H15.6 Q17.4 8 17 13 Q16.4 18 14 20.8 H4.8 Q2.4 14 4 6.6Z" fill="url(#bn)"/><path d="M4.8 20.8 H14 L15 30.6 Q8 33.2 1.2 30.6Z" fill="url(#bn)"/><path d="M4.6 20.8 H14.2" stroke="#0848b0" stroke-width=".9"/><path d="M1.6 29.6 Q8 32 14.8 29.6" stroke="#0848b0" stroke-width=".7" fill="none"/></g>
<g transform="translate(35,0) scale(-1,1)"><rect x="5.6" y="1.2" width="8.8" height="5.8" rx="1" fill="url(#bn)"/><path d="M5.6 3.2 H14.4" stroke="#0a50c0" stroke-width=".7"/><path d="M4 6.6 H15.6 Q17.4 8 17 13 Q16.4 18 14 20.8 H4.8 Q2.4 14 4 6.6Z" fill="url(#bn)"/><path d="M4.8 20.8 H14 L15 30.6 Q8 33.2 1.2 30.6Z" fill="url(#bn)"/><path d="M4.6 20.8 H14.2" stroke="#0848b0" stroke-width=".9"/><path d="M1.6 29.6 Q8 32 14.8 29.6" stroke="#0848b0" stroke-width=".7" fill="none"/></g>
</svg>
<!-- cutlery -->
<svg class="abs" style="left:421px;top:54px" width="32" height="34" viewBox="0 0 32 34" opacity=".72">
<path d="M2 2 V11 Q2 13.5 4 14 V16 H7 V14 Q9 13.5 9 11 V2 H8 V9.5 H6.6 V2 H5.6 V9.5 H4.4 V2 H3.4 V9.5 H3 V2Z" fill="#8a8e94"/>
<rect x="3.6" y="15" width="3.8" height="17" rx="1.6" fill="#f060a4"/>
<path d="M14.5 1 Q17.5 4 17.3 15 H12.6 Q11.5 8 14.5 1Z" fill="#8a8e94"/>
<rect x="13" y="14.5" width="3.8" height="17.5" rx="1.6" fill="#f060a4"/>
<ellipse cx="25.5" cy="7.5" rx="4.6" ry="5.5" fill="#8a8e94"/><rect x="24" y="11" width="3" height="5" fill="#8a8e94"/>
<rect x="23.6" y="15" width="3.8" height="17" rx="1.6" fill="#f060a4"/>
</svg>
<!-- chart -->
<svg class="abs" style="left:484px;top:58px" width="33" height="27" viewBox="0 0 33 27">
<defs><linearGradient id="cg" x1="0" y1="0" x2="0" y2="1"><stop offset="0" stop-color="#fff"/><stop offset="1" stop-color="#cfe0f6"/></linearGradient></defs>
<rect x=".8" y=".8" width="30.8" height="24.8" fill="url(#cg)" stroke="#18244c" stroke-width="1.6"/>
<path d="M7 21 L10.5 13.5 L13 5.5 L20.5 9 L26.5 15.5 L29 10 V21Z" fill="#d4e6f8"/>
<path d="M7 21 L10.5 13.5 L13 5.5 L20.5 9 L26.5 15.5 L29 10" stroke="#2a3a6a" stroke-width="1" fill="none"/>
<path d="M5 3 V21.5 H30" stroke="#18244c" stroke-width="2" fill="none"/>
<path d="M3 6 H5 M3 10 H5 M3 14 H5 M3 18 H5 M8 21.5 V23.5 M13 21.5 V23.5 M18 21.5 V23.5 M23 21.5 V23.5 M28 21.5 V23.5" stroke="#3a4a7a" stroke-width="1.2"/>
<rect x="10" y="2.7" width="6" height="6" fill="#f6e020" stroke="#c8b010" stroke-width=".5"/>
<rect x="7.6" y="11.5" width="6.2" height="5.4" fill="#f04820" stroke="#c03010" stroke-width=".5"/>
<rect x="17.6" y="6" width="6" height="6" fill="#28b428" stroke="#188a18" stroke-width=".5"/>
<rect x="23.6" y="13" width="5.8" height="5.8" fill="#2a80d8" stroke="#1a5cb0" stroke-width=".5"/>
</svg>
<!-- smiley -->
<svg class="abs" style="left:538px;top:54px" width="36" height="34" viewBox="0 0 36 34">
<defs><radialGradient id="sm" cx=".42" cy=".35" r=".7"><stop offset="0" stop-color="#f4c838"/><stop offset=".5" stop-color="#d49c14"/><stop offset="1" stop-color="#7c5a08"/></radialGradient></defs>
<circle cx="20.5" cy="14.5" r="13.2" fill="url(#sm)"/>
<ellipse cx="13.5" cy="9.8" rx="1.5" ry="2.3" fill="#3a2408"/><ellipse cx="23.8" cy="9.8" rx="1.5" ry="2.3" fill="#3a2408"/>
<path d="M14 22 Q22.5 25.5 28 15.5" stroke="#3a2408" stroke-width="1.5" fill="none" stroke-linecap="round"/>
<path d="M4.5 15.5 H15.5 V26 L12 23 L5.5 32 L2 29 L2.5 21.5 L7.5 18.5Z" fill="#0a0af0"/>
<path d="M15.5 16 V26 L12 23" stroke="#7a7a9a" stroke-width=".8" fill="none" opacity=".7"/>
</svg>
<!-- CALS -->
<svg class="abs" style="left:11px;top:129.5px" width="66" height="66" viewBox="0 0 66 66">
<defs><linearGradient id="cbr" x1="0" y1="0" x2="0" y2="1"><stop offset="0" stop-color="#f0543a"/><stop offset="1" stop-color="#d8301c"/></linearGradient>
<linearGradient id="cbf" x1="0" y1="0" x2="1" y2="1"><stop offset="0" stop-color="#fdfdfd"/><stop offset=".48" stop-color="#f2f4f5"/><stop offset=".52" stop-color="#dde1e4"/><stop offset="1" stop-color="#f0f2f3"/></linearGradient>
<linearGradient id="cbm" x1="0" y1="0" x2="1" y2="1"><stop offset="0" stop-color="#e8e8e8"/><stop offset="1" stop-color="#9c9ea0"/></linearGradient></defs>
<rect x="1" y="7.5" width="63" height="57" rx="4" fill="#8e9094"/>
<rect x="3" y="8" width="59" height="53" rx="1.5" fill="#fcfcfc"/>
<path d="M3 24 V9 Q3 7 5 7 H60 Q62 7 62 9 V24Z" fill="url(#cbr)"/>
<rect x="3" y="57" width="59" height="4" fill="#dcdcdc"/>
<rect x="14.8" y=".8" width="5.6" height="12" rx="2" fill="#f4f4f4" stroke="#a0a2a6" stroke-width="1"/>
<rect x="45.6" y=".8" width="5.6" height="12" rx="2" fill="#f4f4f4" stroke="#a0a2a6" stroke-width="1"/>
<text x="8.2" y="22" font-family="Liberation Sans, sans-serif" font-weight="bold" font-size="10" fill="#fff" stroke="#fff" stroke-width=".3" textLength="19.5" lengthAdjust="spacingAndGlyphs">AUG</text>
<text x="14.5" y="50.5" font-family="Liberation Sans, sans-serif" font-weight="bold" font-size="31" fill="#2c2c2c" stroke="#2c2c2c" stroke-width=".8">2</text>
<circle cx="43.8" cy="42.6" r="20.8" fill="url(#cbm)" stroke="#a4a6a8" stroke-width=".8"/>
<circle cx="43.8" cy="42.6" r="18.4" fill="url(#cbf)" stroke="#c8cacc" stroke-width=".6"/>
<path d="M39.8 42.6 H61 M43.8 38.6 V46.6" stroke="#8a9094" stroke-width="1"/>
<path d="M43.8 57 V60 M52.8 54.5 L54.3 57 M34.8 54.5 L33.3 57 M57.8 49 L60.3 50.5" stroke="#b0b4b8" stroke-width=".9"/>
</svg>
<svg class="abs" style="left:197.5px;top:54.5px" width="33" height="33" viewBox="0 0 66 66">
<defs><linearGradient id="csr" x1="0" y1="0" x2="0" y2="1"><stop offset="0" stop-color="#f0543a"/><stop offset="1" stop-color="#d8301c"/></linearGradient>
<linearGradient id="csf" x1="0" y1="0" x2="1" y2="1"><stop offset="0" stop-color="#fdfdfd"/><stop offset=".48" stop-color="#f2f4f5"/><stop offset=".52" stop-color="#dde1e4"/><stop offset="1" stop-color="#f0f2f3"/></linearGradient>
<linearGradient id="csm" x1="0" y1="0" x2="1" y2="1"><stop offset="0" stop-color="#e8e8e8"/><stop offset="1" stop-color="#9c9ea0"/></linearGradient></defs>
<rect x="1" y="7.5" width="63" height="57" rx="4" fill="#8e9094"/>
<rect x="3" y="8" width="59" height="53" rx="1.5" fill="#fcfcfc"/>
<path d="M3 24 V9 Q3 7 5 7 H60 Q62 7 62 9 V24Z" fill="url(#csr)"/>
<rect x="3" y="57" width="59" height="4" fill="#dcdcdc"/>
<rect x="14.8" y=".8" width="5.6" height="12" rx="2" fill="#f4f4f4" stroke="#a0a2a6" stroke-width="1"/>
<rect x="45.6" y=".8" width="5.6" height="12" rx="2" fill="#f4f4f4" stroke="#a0a2a6" stroke-width="1"/>
<text x="8.2" y="22" font-family="Liberation Sans, sans-serif" font-weight="bold" font-size="10" fill="#fff" stroke="#fff" stroke-width=".3" textLength="19.5" lengthAdjust="spacingAndGlyphs">AUG</text>
<text x="14.5" y="50.5" font-family="Liberation Sans, sans-serif" font-weight="bold" font-size="31" fill="#2c2c2c" stroke="#2c2c2c" stroke-width=".8">2</text>
<circle cx="43.8" cy="42.6" r="20.8" fill="url(#csm)" stroke="#a4a6a8" stroke-width=".8"/>
<circle cx="43.8" cy="42.6" r="18.4" fill="url(#csf)" stroke="#c8cacc" stroke-width=".6"/>
<path d="M39.8 42.6 H61 M43.8 38.6 V46.6" stroke="#8a9094" stroke-width="1"/>
<path d="M43.8 57 V60 M52.8 54.5 L54.3 57 M34.8 54.5 L33.3 57 M57.8 49 L60.3 50.5" stroke="#b0b4b8" stroke-width=".9"/>
</svg>
<!-- bolus icon -->
<svg class="abs" style="left:855px;top:140px" width="50" height="52" viewBox="0 0 50 52">
<defs><linearGradient id="gb" x1="0" y1="0" x2="1" y2="0"><stop offset="0" stop-color="#0c8a18"/><stop offset=".5" stop-color="#22c030"/><stop offset="1" stop-color="#0a7a14"/></linearGradient>
<linearGradient id="yb" x1="0" y1="0" x2="0" y2="1"><stop offset="0" stop-color="#fae060"/><stop offset=".35" stop-color="#f8c028"/><stop offset="1" stop-color="#f0a010"/></linearGradient>
<linearGradient id="cf" x1="0" y1="0" x2="1" y2="1"><stop offset="0" stop-color="#fdfdfd"/><stop offset=".5" stop-color="#eef0f2"/><stop offset=".55" stop-color="#d8dcdf"/><stop offset="1" stop-color="#f0f2f3"/></linearGradient>
<linearGradient id="cm" x1="0" y1="0" x2="1" y2="1"><stop offset="0" stop-color="#e0e0e0"/><stop offset="1" stop-color="#8c8e90"/></linearGradient></defs>
<path d="M19 16 Q19 11 24 10.5 H34 Q38 11 38 16 V46 Q38 49 35 49 H22 Q19 49 19 46Z" fill="url(#gb)"/>
<path d="M19.5 16.5 Q20 11.5 24 10.8 H34 Q37 11.2 37.6 15 Q28 19 19.5 16.5Z" fill="#e4f6e4"/>
<rect x="20" y="2" width="19" height="8.5" rx="2.5" fill="#12b022"/>
<rect x="21" y="2.4" width="17" height="2.4" rx="1.2" fill="#3ad048"/>
<path d="M31.5 24 Q31.5 20 35 19.5 H45 Q48.6 20 48.6 24 V46.5 Q48.6 49.5 45.5 49.5 H34.5 Q31.5 49.5 31.5 46.5Z" fill="url(#yb)"/>
<path d="M33.5 22 Q40 19.5 47 22 L47.5 26 Q40 23.5 33 26Z" fill="#fbe680" opacity=".8"/>
<rect x="33" y="13" width="14" height="6.5" rx="2" fill="#f8c420"/>
<rect x="34" y="13.4" width="12" height="2" rx="1" fill="#fce060"/>
<circle cx="16.7" cy="33.6" r="15.4" fill="url(#cm)" stroke="#8a8c90" stroke-width=".6"/>
<circle cx="16.7" cy="33.6" r="13.4" fill="url(#cf)" stroke="#c4c6c8" stroke-width=".5"/>
<path d="M13 33.6 H29 M16.7 30.5 V36.7" stroke="#8a9094" stroke-width=".9"/>
<path d="M16.7 44.5 V46.5 M23 42.5 L24 44.3 M10.4 42.5 L9.4 44.3" stroke="#b0b4b8" stroke-width=".8"/>
</svg>
<!-- shield -->
<svg class="abs" style="left:91px;top:587px" width="15" height="16" viewBox="0 0 15 16">
<path d="M7.5 1 Q10 2.8 13.6 3 Q14 11 7.5 15.2 Q1 11 1.4 3 Q5 2.8 7.5 1Z" fill="#ededee" stroke="#d8dadc" stroke-width="1"/>
<path d="M5 6 Q7.5 4.5 10 6 Q10 9.5 7.5 11 Q5 9.5 5 6Z" fill="#f8f8f9" stroke="#dcdee0" stroke-width=".7"/>
</svg>
<!-- status icons -->
<svg class="abs" style="left:884px;top:619px" width="20" height="20" viewBox="0 0 20 20">
<defs><linearGradient id="ph" x1="0" y1="0" x2="1" y2="1"><stop offset="0" stop-color="#6ab0f4"/><stop offset="1" stop-color="#1c5cd0"/></linearGradient></defs>
<path d="M1.8 3 Q6 .8 11.5 2.6 L10.8 15.5 Q6.5 17.6 3 15.5Z" fill="#a8b0bc"/>
<path d="M2.6 4.5 Q6.5 3.2 10.6 4.6 L10 14.6 Q6.5 16 3.6 14.6Z" fill="url(#ph)"/>
<circle cx="13" cy="12.8" r="4.6" fill="#fff" stroke="#e01414" stroke-width="1.9"/>
<path d="M9.9 9.7 L16.1 15.9" stroke="#e01414" stroke-width="1.9"/>
</svg>
<svg class="abs" style="left:907px;top:620px" width="18" height="18" viewBox="0 0 18 18">
<defs><radialGradient id="gl" cx=".4" cy=".35" r=".7"><stop offset="0" stop-color="#48b0f4"/><stop offset=".6" stop-color="#1060d0"/><stop offset="1" stop-color="#082a88"/></radialGradient></defs>
<circle cx="9" cy="9" r="8.2" fill="url(#gl)"/>
<path d="M3 4.5 Q6 1 10.5 1.5 Q9.5 4 6.5 5 Q5.5 7.5 3.5 8 Q2 6.5 3 4.5Z" fill="#18a828"/>
<path d="M12 5.5 Q15 5 16.6 8 Q17 11 15.5 12.5 Q14 10 12.5 9.5 Q11 7.5 12 5.5Z" fill="#18a828"/>
<path d="M4.5 11 Q8 10 10.5 12 Q10 15.5 7.5 16.5 Q5 15 4.5 11Z" fill="#18a828"/>
</svg>
<svg class="abs" style="left:927px;top:628px" width="12" height="12" viewBox="0 0 12 12"><g fill="#b4b09c"><rect x="9" y="1" width="2" height="2"/><rect x="5" y="5" width="2" height="2"/><rect x="9" y="5" width="2" height="2"/><rect x="1" y="9" width="2" height="2"/><rect x="5" y="9" width="2" height="2"/><rect x="9" y="9" width="2" height="2"/></g></svg>

</body>
</html>
